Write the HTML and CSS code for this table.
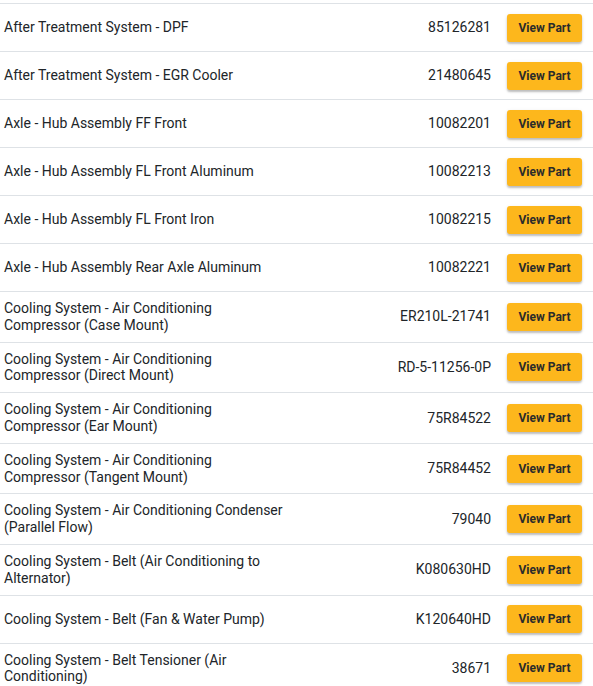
FILE: index.html
```html
<!DOCTYPE html>
<html>
<head>
<meta charset="utf-8">
<link rel="stylesheet" href="styles.css">
</head>
<body>
<div class="parts">
  <div class="row"><div class="name">After Treatment System - DPF</div><div class="num">85126281</div><div class="act"><button class="btn">View Part</button></div></div>
  <div class="row"><div class="name">After Treatment System - EGR Cooler</div><div class="num">21480645</div><div class="act"><button class="btn">View Part</button></div></div>
  <div class="row"><div class="name">Axle - Hub Assembly FF Front</div><div class="num">10082201</div><div class="act"><button class="btn">View Part</button></div></div>
  <div class="row"><div class="name">Axle - Hub Assembly FL Front Aluminum</div><div class="num">10082213</div><div class="act"><button class="btn">View Part</button></div></div>
  <div class="row"><div class="name">Axle - Hub Assembly FL Front Iron</div><div class="num">10082215</div><div class="act"><button class="btn">View Part</button></div></div>
  <div class="row"><div class="name">Axle - Hub Assembly Rear Axle Aluminum</div><div class="num">10082221</div><div class="act"><button class="btn">View Part</button></div></div>
  <div class="row"><div class="name">Cooling System - Air Conditioning Compressor (Case Mount)</div><div class="num">ER210L-21741</div><div class="act"><button class="btn">View Part</button></div></div>
  <div class="row"><div class="name">Cooling System - Air Conditioning Compressor (Direct Mount)</div><div class="num">RD-5-11256-0P</div><div class="act"><button class="btn">View Part</button></div></div>
  <div class="row"><div class="name">Cooling System - Air Conditioning Compressor (Ear Mount)</div><div class="num">75R84522</div><div class="act"><button class="btn">View Part</button></div></div>
  <div class="row"><div class="name">Cooling System - Air Conditioning Compressor (Tangent Mount)</div><div class="num">75R84452</div><div class="act"><button class="btn">View Part</button></div></div>
  <div class="row"><div class="name">Cooling System - Air Conditioning Condenser (Parallel Flow)</div><div class="num">79040</div><div class="act"><button class="btn">View Part</button></div></div>
  <div class="row"><div class="name">Cooling System - Belt (Air Conditioning to Alternator)</div><div class="num">K080630HD</div><div class="act"><button class="btn">View Part</button></div></div>
  <div class="row"><div class="name">Cooling System - Belt (Fan &amp; Water Pump)</div><div class="num">K120640HD</div><div class="act"><button class="btn">View Part</button></div></div>
  <div class="row"><div class="name">Cooling System - Belt Tensioner (Air Conditioning)</div><div class="num">38671</div><div class="act"><button class="btn">View Part</button></div></div>
</div>
</body>
</html>
```
FILE: styles.css
```css
html, body {
  margin: 0;
  padding: 0;
  background: #ffffff;
}
body {
  font-family: Roboto, "Liberation Sans", sans-serif;
  font-size: 14px;
  color: #212529;
  padding-top: 3px;
}
.parts {
  display: flex;
  flex-direction: column;
}
.row {
  display: grid;
  grid-template-columns: 289px 1fr auto;
  align-items: center;
  border-top: 1px solid #dee2e6;
  padding: 8px 11px 8px 0;
  min-height: 31px;
}
.name {
  padding-left: 4px;
  line-height: 1.2;
}
.num {
  text-align: right;
  line-height: 1.2;
  padding-right: 16px;
}
.act {
  display: flex;
  align-items: center;
}
.btn {
  font-family: Roboto, "Liberation Sans", sans-serif;
  font-size: 12px;
  font-weight: 700;
  color: #2b2b2b;
  background: #fdb71c;
  border: none;
  border-radius: 3px;
  height: 28px;
  width: 75px;
  padding: 0;
  box-shadow: 0 2px 2px rgba(0, 0, 0, 0.22), 0 1px 4px rgba(0, 0, 0, 0.08);
  cursor: pointer;
}
```
